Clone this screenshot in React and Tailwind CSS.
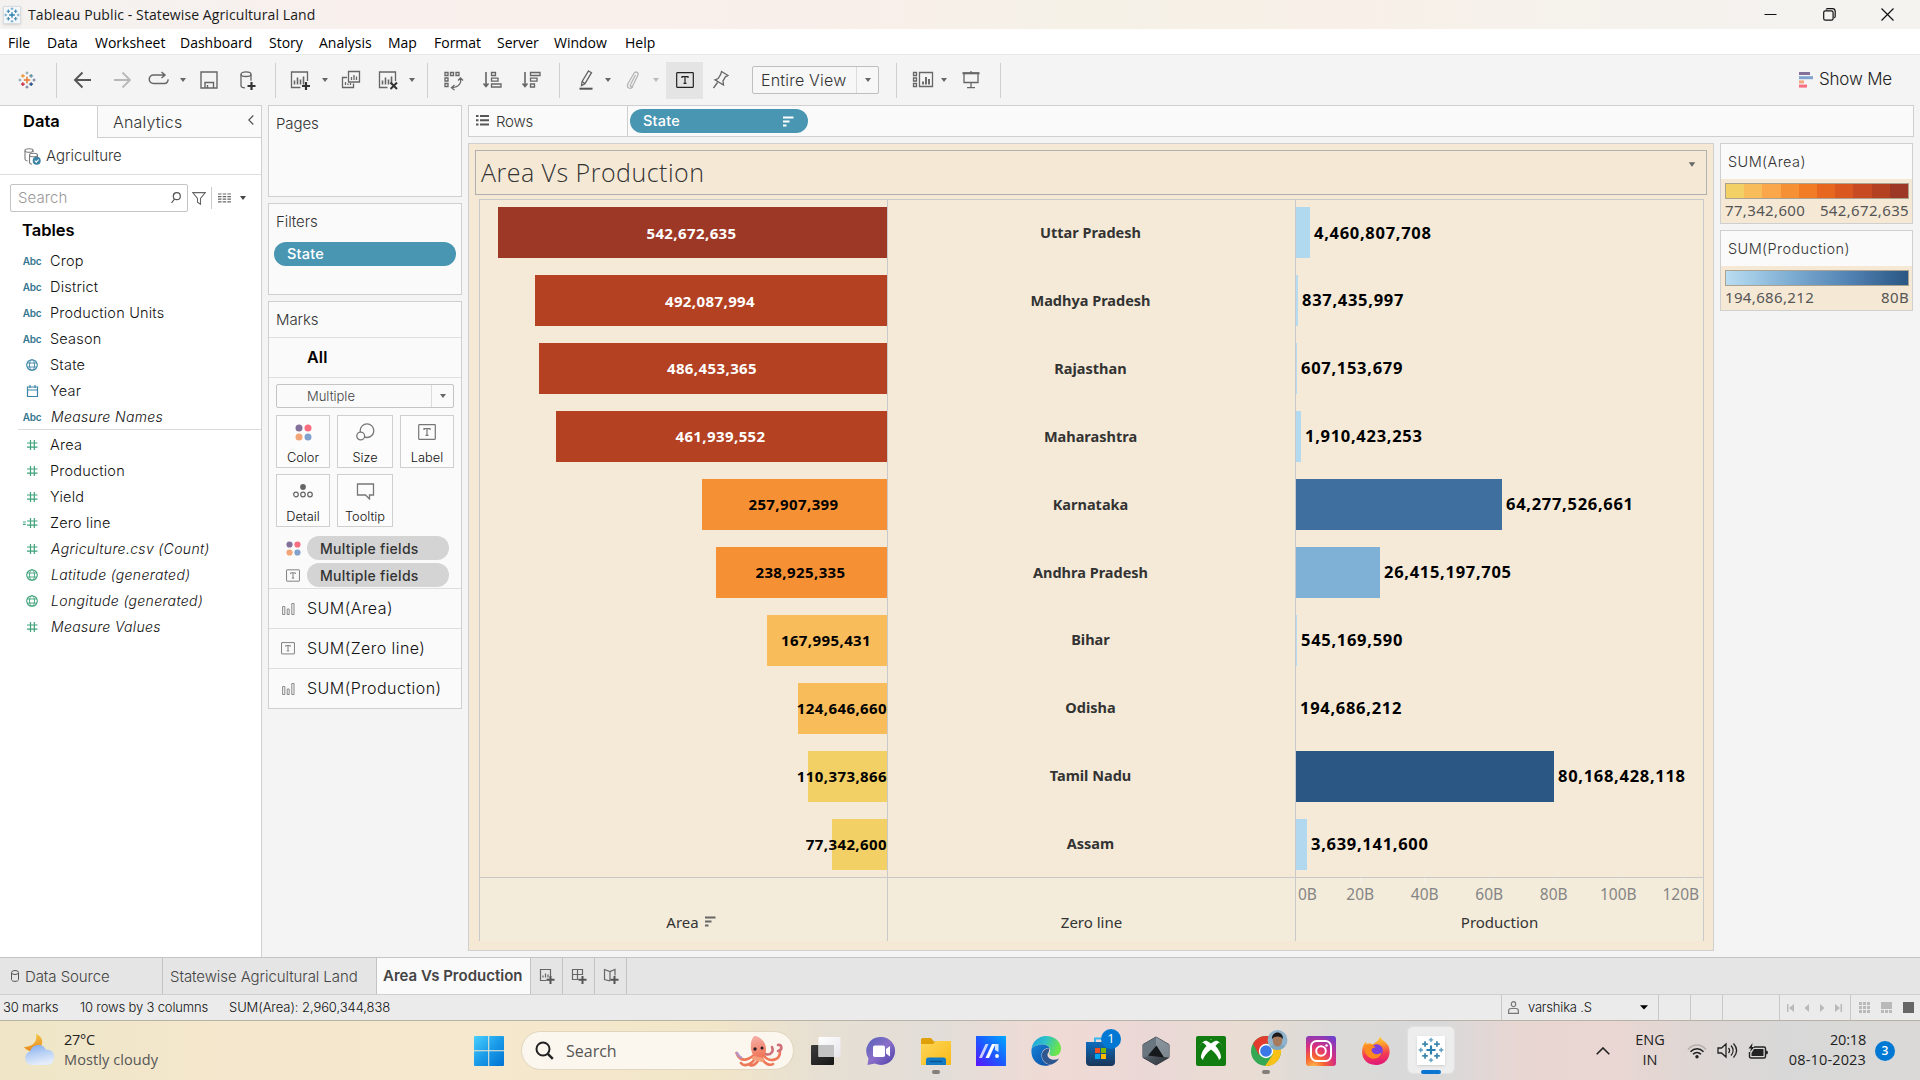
import React from "react";

const UI = "font-[Inter,sans-serif] font-[350]";
const SANS = "font-['Open_Sans',sans-serif] font-normal";
const VIZ = "font-['Noto_Sans',sans-serif] font-normal";

/* ---------- shared glyphs ---------- */

const PLUSES = [
  [12, 12, 4.2, "#e8762c", "#2b7fae"],
  [6.5, 6.5, 2.6, "#eb912b", "#3d86ad"],
  [17.5, 6.5, 2.6, "#5c8aa0", "#3d86ad"],
  [6.5, 17.5, 2.6, "#c72037", "#3d86ad"],
  [17.5, 17.5, 2.6, "#1f457e", "#3d86ad"],
  [12, 2.6, 2, "#7199a6", "#5a9cbd"],
  [12, 21.4, 2, "#5b6591", "#5a9cbd"],
  [2.6, 12, 2, "#7199a6", "#5a9cbd"],
  [21.4, 12, 2, "#5b6591", "#5a9cbd"],
];

function TableauMark({ className, mono }) {
  return (
    <svg viewBox="0 0 24 24" className={className} fill="none">
      {PLUSES.map(([x, y, r, c, m], i) => (
        <path
          key={i}
          d={`M${x - r} ${y}H${x + r}M${x} ${y - r}V${y + r}`}
          stroke={mono ? m : c}
          strokeWidth={i === 0 ? 2 : i < 5 ? 1.6 : 1.2}
        />
      ))}
    </svg>
  );
}

function Icon({ children, className = "", stroke = "#666" }) {
  return (
    <svg viewBox="0 0 24 24" width="24" height="24" fill="none" stroke={stroke} strokeWidth="1.3" className={`shrink-0 ${className}`}>
      {children}
    </svg>
  );
}

function Caret({ className = "", fill = "#666" }) {
  return (
    <svg viewBox="0 0 12 12" width="12" height="12" className={`shrink-0 ${className}`}>
      <path d="M3 4h6l-3 4z" fill={fill} />
    </svg>
  );
}

const Plus = ({ x, y, r = 4 }) => (
  <path d={`M${x - r} ${y}h${2 * r}M${x} ${y - r}v${2 * r}`} stroke="#333" strokeWidth="2.2" />
);

const Sep = ({ className = "" }) => <div className={`h-[35px] w-px shrink-0 bg-[#cfcfcf] ${className}`} />;

const TBox = ({ w = 18, h = 16, className = "", stroke = "#777" }) => (
  <svg viewBox="0 0 18 16" width={w} height={h} fill="none" stroke={stroke} strokeWidth="1.2" className={`shrink-0 ${className}`}>
    <rect x="0.7" y="0.7" width="16.6" height="14.6" rx="0.5" />
    <path d="M6 6V4.6h6V6M9 4.6v6.8M7.5 11.4h3" />
  </svg>
);

const ColorDots = ({ size = 17 }) => (
  <svg viewBox="0 0 17 17" width={size} height={size} className="shrink-0">
    <circle cx="4" cy="4" r="3.5" fill="#83709b" />
    <circle cx="13" cy="4" r="3.5" fill="#f86d80" />
    <circle cx="4" cy="13" r="3.5" fill="#f3a577" />
    <circle cx="13" cy="13" r="3.5" fill="#80a2cc" />
  </svg>
);

const SortGlyph = ({ className = "", fill = "#666" }) => (
  <svg viewBox="0 0 11 11" width="11" height="11" className={`shrink-0 ${className}`} fill={fill}>
    <path d="M0 0.5h10.5v2H0zM0 4.5h6.5v2H0zM0 8.5h3.5v2H0z" />
  </svg>
);

/* ---------- window chrome ---------- */

function TitleBar() {
  return (
    <div className={`flex h-[29px] items-center bg-[linear-gradient(90deg,#f4f2f0_0%,#f9f0ed_20%,#f9efea_42%,#f5f1e7_56%,#f8f0e8_70%,#f5f2ed_85%,#f4f3f0_100%)] ${SANS}`}>
      <div className="ml-[3px] flex h-[18px] w-[18px] items-center justify-center border border-[#d9dde0] bg-[#f3f7f9] shadow-sm">
        <TableauMark mono className="h-4 w-4" />
      </div>
      <span className="ml-[7px] text-[14px] tracking-[0.09px] whitespace-nowrap text-[#1a1a1a]">Tableau Public - Statewise Agricultural Land</span>
      <div className="mr-[26px] ml-auto flex items-center gap-[45.500px]">
        <svg width="13" height="13" viewBox="0 0 13 13" stroke="#111" fill="none"><path d="M0.5 6.5h12" /></svg>
        <svg width="13" height="13" viewBox="0 0 13 13" stroke="#111" fill="none" strokeWidth="1.2">
          <rect x="0.7" y="2.8" width="9.4" height="9.4" rx="1.6" />
          <path d="M3 1.5Q3.6 .7 5 .7h4.400q2.800 0 2.800 2.800v4.400q0 1.500-.9 2" />
        </svg>
        <svg width="13" height="13" viewBox="0 0 13 13" stroke="#111" fill="none" strokeWidth="1.2"><path d="M.5 .5l12 12M12.500 .5l-12 12" /></svg>
      </div>
    </div>
  );
}

const MENU = [
  ["File", "w-[39px]"], ["Data", "w-[48px]"], ["Worksheet", "w-[85px]"], ["Dashboard", "w-[89px]"], ["Story", "w-[50px]"],
  ["Analysis", "w-[69px]"], ["Map", "w-[46px]"], ["Format", "w-[63px]"], ["Server", "w-[57px]"], ["Window", "w-[71px]"], ["Help", "w-[40px]"],
];

function MenuBar() {
  return (
    <div className={`flex h-[25px] items-center bg-white pt-px pl-2 text-[14px] text-black ${SANS}`}>
      {MENU.map(([m, w]) => <span key={m} className={w}>{m}</span>)}
    </div>
  );
}

const Bars = ({ x = 0, y = 0, s = 1 }) => (
  <g transform={`translate(${x} ${y}) scale(${s})`}><path d="M6.500 16v-4M9.500 16v-7M12.500 16v-5M15.500 16v-8" strokeWidth="1.6" /></g>
);

function Toolbar() {
  return (
    <div className="flex h-[51px] items-center border-t border-[#e8e8e8] bg-[#f4f4f4]">
      <TableauMark className="ml-[18px] h-[18px] w-[18px]" />
      <Sep className="ml-[20px]" />
      <Icon className="ml-[14px]"><path d="M20 12H4.500M11.500 4.500L4 12l7.500 7.500" strokeWidth="1.9" stroke="#555" /></Icon>
      <Icon className="ml-[15px]" stroke="#b8b8b8"><path d="M4 12h15.500M12.500 4.500L20 12l-7.500 7.500" strokeWidth="1.8" /></Icon>
      <Icon className="ml-[13px]"><path d="M17.500 7H6.500a3.700 3.700 0 0 0 0 8.500h11a3.700 3.700 0 0 0 3.500-4.200M14.500 4l3.500 3-3.500 3" strokeWidth="1.500" /></Icon>
      <Caret className="ml-[6px]" />
      <Icon className="ml-2"><path d="M4 4h16v16H4zM8 20v-5.500h8.500V20M10.500 17v3" strokeWidth="1.400" /></Icon>
      <Icon className="ml-[14px]">
        <ellipse cx="11" cy="6.200" rx="5" ry="2.300" /><path d="M6 6.200v11.500c0 1 1.500 2 4 2.200M16 6.200v6.500" /><Plus x={16.500} y={18} />
      </Icon>
      <Sep className="ml-[16px]" />
      <Icon className="ml-3"><path d="M19.500 13V4h-16v15.500h9" /><Bars y={0.500} /><Plus x={18} y={18} /></Icon>
      <Caret className="ml-[7px]" />
      <Icon className="ml-2"><path d="M9.500 3.500h11v10.500h-11zM8 9.500H3.500V19.500h11V15.500M12.500 12v-3M15 12V7M17.500 12V8.500M6.500 17v-3M9 17v-1.500M11.500 17v-2" /></Icon>
      <Icon className="ml-[13px]"><path d="M19.500 13V4h-16v15.500h8" /><Bars y={0.500} /><path d="M14.500 14.500l6.500 6.500M21 14.500l-6.500 6.500" stroke="#333" strokeWidth="2" /></Icon>
      <Caret className="ml-[6px]" />
      <Sep className="ml-[9px]" />
      <Icon className="ml-[13px]">
        <path d="M4 4.500h3v3H4zM9.500 4.500h3v3h-3zM15 4.500h3v3h-3zM4 10h3v3H4zM4 15.500h3v3H4z" />
        <path d="M19.500 10.500c1 4-1 8.500-8.500 9M17 12.500l2.500-2.500 2.500 2.500M13.500 17l-3 2.700 3 2.300" />
      </Icon>
      <Icon className="ml-[15px]"><path d="M6 4v14M3.500 15.500L6 18.500l2.500-3" strokeWidth="1.600" /><path d="M11.500 4.500h4v3h-4zM11.500 10.200h6.500v3h-6.500zM11.500 16h9.500v3h-9.500z" /></Icon>
      <Icon className="ml-[15px]"><path d="M6 4v14M3.500 15.500L6 18.500l2.500-3" strokeWidth="1.600" /><path d="M11.500 4.500h9.500v3h-9.500zM11.500 10.200h6.500v3h-6.500zM11.500 16h4v3h-4z" /></Icon>
      <Sep className="ml-4" />
      <Icon className="ml-[14px]"><path d="M14.500 3l3 1.700-6.500 11-3.500 1.800.5-3.800zM8 13.500l3 2" /><path d="M5.500 20.700h13" stroke="#555" strokeWidth="2" /></Icon>
      <Caret className="ml-[4px]" />
      <Icon className="ml-[6px]" stroke="#b5b5b5"><path d="M15.500 7l-5 9.500c-1 1.800 1.200 2.800 2.200 1.200l5-10c1.500-3.300-2-5-3.800-2.200L8 15.500c-2 4.500 2.500 6.500 5 3" /></Icon>
      <Caret className="ml-[6px]" fill="#bbb" />
      <div className="ml-[4px] flex h-[37px] w-[37px] items-center justify-center bg-[#e4e4e4]"><TBox stroke="#222" /></div>
      <Icon className="ml-[5px]"><path d="M13.500 3.500l6.500 4-1.500 1-1 .2-2.500 4.300.5 4-8.500-5.200 3.200-1.300 2.600-4.300zM9.500 14.500L5.500 20" /></Icon>
      <div className="ml-5 flex h-7 w-[127px] items-center rounded-xs border border-[#bfbfbf] bg-[#f7f7f7]">
        <span className="w-[103px] pl-2 text-[16px] tracking-[0.2px] whitespace-nowrap text-[#333]">Entire View</span>
        <div className="flex h-full flex-1 items-center justify-center border-l border-[#dcdcdc]"><Caret /></div>
      </div>
      <Sep className="ml-[17px]" />
      <Icon className="ml-[14px]"><path d="M2.500 4.500h3v3h-3zM2.500 10h3v3h-3zM2.500 15.500h3v3h-3zM8.500 4.500h13v14h-13z" /><path d="M12 16.500v-3M15 16.500V9M18 16.500v-5.500" strokeWidth="1.900" /></Icon>
      <Caret className="ml-[3px]" />
      <Icon className="ml-[9px]"><path d="M3.500 5.200h17" strokeWidth="2.200" /><path d="M5 6v8.500h14V6M12 3v2M12 14.500v5M8 19.700h8" /></Icon>
      <Sep className="ml-[17px]" />
      <svg viewBox="0 0 14 16" width="14" height="16" className="ml-auto">
        <path d="M0 0h11v3H0z" fill="#83709b" /><path d="M0 4.200h14v3H0z" fill="#7fa4cf" /><path d="M0 8.400h5v3H0z" fill="#f2a67d" /><path d="M0 12.600h8v3H0z" fill="#f86d80" />
      </svg>
      <span className="mr-[25px] ml-[6px] w-[76px] text-[17px] tracking-[-0.2px] whitespace-nowrap text-[#222]">Show Me</span>
    </div>
  );
}

/* ---------- data pane ---------- */

const FIELDS = [
  ["abc", "Crop"], ["abc", "District"], ["abc", "Production Units"], ["abc", "Season"],
  ["globe", "State"], ["date", "Year"], ["abc", "Measure Names", true],
];
const MEASURES = [
  ["num", "Area"], ["num", "Production"], ["num", "Yield"], ["calc", "Zero line"], ["num", "Agriculture.csv (Count)", true],
  ["globe", "Latitude (generated)", true], ["globe", "Longitude (generated)", true], ["num", "Measure Values", true],
];

function FieldIcon({ kind, color }) {
  if (kind === "abc") return <span className="text-[10px] font-semibold tracking-[-0.3px] text-[#33758f]">Abc</span>;
  return (
    <svg viewBox="0 0 20 12" width="20" height="12" fill="none" stroke={color} strokeWidth="1.200" className="overflow-visible">
      {kind === "globe" && (
        <g strokeWidth="0.900">
          <circle cx="10" cy="6" r="5.300" strokeWidth="1.100" />
          <ellipse cx="10" cy="6" rx="2.500" ry="5.300" />
          <path d="M5.200 4h9.600M5.200 8h9.600" />
        </g>
      )}
      {kind === "date" && <path d="M5.500 2h10v9.500h-10zM5.500 5h10M8 0v3M13 0v3" />}
      {(kind === "num" || kind === "calc") && <path d="M5 4h10.500M5 8.200h10.500M8.500 1v10M12.300 1v10" />}
      {kind === "calc" && <path d="M1 5h2.800M1 7.300h2.800" />}
    </svg>
  );
}

function FieldList({ items, color }) {
  return items.map(([kind, name, italic]) => (
    <div key={name} className="flex h-[26px] items-center">
      <div className="ml-5 flex w-6 items-center justify-center"><FieldIcon kind={kind} color={color} /></div>
      <span className={italic ? "mb-[2px] ml-[7px] text-[14px] tracking-[0.35px] whitespace-nowrap italic" : "ml-[6px] text-[14.500px] tracking-[0.200px] whitespace-nowrap"}>{name}</span>
    </div>
  ));
}

function DataPane() {
  return (
    <div className="flex h-[852px] w-[262px] flex-col border-t border-r border-[#cfcfcf] bg-white text-[#111]">
      <div className="flex h-8">
        <div className="w-[97px] pt-[3px] pl-[23px] text-[16.500px] font-semibold tracking-[0px] text-black">Data</div>
        <div className="flex flex-1 items-center border-b border-l border-[#cfcfcf] bg-[#fafafa] pl-[15px] text-[16px] tracking-[0.2px] text-[#333]">
          Analytics
          <svg width="6" height="10" viewBox="0 0 6 10" className="mr-[7px] mb-1 ml-auto" fill="none" stroke="#555" strokeWidth="1.200"><path d="M5.300 .5L.8 5l4.500 4.500" /></svg>
        </div>
      </div>
      <div className="flex h-[37px] items-center border-b border-[#dedede] pl-6 text-[15px] tracking-[-0.05px] text-[#333]">
        <svg width="17" height="17" viewBox="0 0 17 17" fill="none" stroke="#777" strokeWidth="1.100" className="mr-[5px]">
          <ellipse cx="5" cy="2.500" rx="4" ry="1.800" /><path d="M1 2.500v8.500c0 1 1 1.700 2.500 2M5.500 8v6.500c0 .8 1 1.500 2.500 1.700" /><ellipse cx="9.500" cy="7" rx="4" ry="1.800" /><path d="M9 2.500v1.500M13.500 7v2" />
          <circle cx="12.700" cy="12.700" r="4" fill="#3a83a6" stroke="none" /><path d="M10.800 12.700l1.500 1.500 2.500-2.700" stroke="#fff" />
        </svg>
        Agriculture
      </div>
      <div className="mt-[9px] ml-[10px] flex h-7 items-center">
        <div className="flex h-7 w-[178px] items-center rounded-xs border border-[#c4c4c4] pl-[7px] text-[15px] tracking-[0.1px] text-[#999]">
          Search
          <svg width="10" height="12" viewBox="0 0 10 12" fill="none" stroke="#555" strokeWidth="1.200" className="mr-[6px] ml-auto"><circle cx="5.800" cy="4.200" r="3.500" /><path d="M3.500 7L.5 11" /></svg>
        </div>
        <svg width="14" height="13" viewBox="0 0 14 13" fill="none" stroke="#666" strokeWidth="1.100" className="ml-[4px]"><path d="M.7 .6h12.600L8.500 6.500v5.800l-3-2V6.500z" /></svg>
        <div className="ml-[5px] h-[22px] w-px bg-[#ccc]" />
        <svg width="13" height="10" viewBox="0 0 13 10" stroke="#666" strokeWidth="1.200" className="ml-[6px]"><path d="M0 1h13M0 3.600h13M0 6.200h13M0 8.800h13" strokeDasharray="3.500 1.200" /></svg>
        <Caret className="ml-[6px]" fill="#444" />
      </div>
      <div className="mt-[2px] mb-[2px] flex h-8 items-center pl-[22px] text-[16.500px] font-semibold tracking-[0px] text-black">Tables</div>
      <FieldList items={FIELDS} color="#3a83a6" />
      <div className="-mt-px ml-[18px] h-[3px] border-t border-[#dcdcdc]" />
      <FieldList items={MEASURES} color="#3fa37c" />
    </div>
  );
}

/* ---------- cards column ---------- */

const panel = "border border-[#cfcfcf] bg-[#fafafa]";
const cardTitle = "text-[15px] tracking-[-0.1px] text-[#333]";

function MarkButton({ label, children, className }) {
  return (
    <div className={`flex h-[53px] flex-col items-center justify-between border border-[#cfcfcf] bg-[#fcfcfc] pt-[6px] pb-px ${className}`}>
      <div className="flex h-5 items-center">{children}</div>
      <span className="text-[12.800px] leading-[17px] text-[#111]">{label}</span>
    </div>
  );
}

const MiniBars = () => (
  <svg width="13" height="12" viewBox="0 0 13 12" fill="none" stroke="#888"><path d="M.6 3.500h2.200v8H.6zM5.200 6h2v5.500h-2zM9.800 .5h2.200v11H9.800z" /></svg>
);

function MarksCard() {
  return (
    <div className={`mt-[6px] flex h-[408px] flex-col ${panel}`}>
      <div className={`flex h-[36px] items-center border-b border-[#dedede] pt-[2px] pl-[7px] ${cardTitle}`}>Marks</div>
      <div className="flex h-10 items-center border-b border-[#dedede] pb-[2px] pl-[38px] text-[16px] font-semibold tracking-[0.2px] text-black">All</div>
      <div className="mt-[6px] ml-[7px] flex h-6 w-[178px] items-center rounded-xs border border-[#c4c4c4] text-[13px] text-[#444]">
        <span className="flex-1 pt-px pl-[30px]">Multiple</span>
        <div className="flex h-full w-[22px] items-center justify-center border-l border-[#dcdcdc]"><Caret /></div>
      </div>
      <div className="mt-[7px] ml-[7px] flex gap-[7px]">
        <MarkButton label="Color" className="w-[54px]"><ColorDots /></MarkButton>
        <MarkButton label="Size" className="w-[56px]">
          <svg width="19" height="18" viewBox="0 0 19 18" fill="#fcfcfc" stroke="#777" strokeWidth="1.300"><circle cx="11" cy="7.700" r="6.800" /><circle cx="4.700" cy="13" r="3.900" /></svg>
        </MarkButton>
        <MarkButton label="Label" className="w-[54px]"><TBox /></MarkButton>
      </div>
      <div className="mt-[6px] ml-[7px] flex gap-[7px]">
        <MarkButton label="Detail" className="w-[54px]">
          <svg width="20" height="14" viewBox="0 0 20 14" fill="none" stroke="#666" strokeWidth="1.200"><circle cx="10" cy="3" r="2.900" fill="#666" stroke="none" /><circle cx="3" cy="10.500" r="2.300" /><circle cx="10" cy="10.500" r="2.300" /><circle cx="17" cy="10.500" r="2.300" /></svg>
        </MarkButton>
        <MarkButton label="Tooltip" className="w-[56px]">
          <svg width="19" height="17" viewBox="0 0 19 17" fill="none" stroke="#777" strokeWidth="1.300"><path d="M1.500 1h16v11h-4v4l-4-4h-8z" /></svg>
        </MarkButton>
      </div>
      <div className="mt-[9px] flex flex-col gap-[3px]">
        {["dots", "text"].map((k) => (
          <div key={k} className="flex h-6 items-center">
            <div className="ml-[17px] flex w-[14px] justify-center">{k === "dots" ? <ColorDots size={15} /> : <TBox w={14} h={13} />}</div>
            <div className="ml-[7px] flex h-6 w-[142px] items-center rounded-full bg-[#d4d4d4] pt-px pl-[13px] text-[14px] font-medium tracking-[0.3px] whitespace-nowrap text-[#333]">Multiple fields</div>
          </div>
        ))}
      </div>
      {[["bar", "SUM(Area)"], ["text", "SUM(Zero line)"], ["bar", "SUM(Production)"]].map(([k, name], i) => (
        <div key={name} className={`flex h-10 items-center border-t border-[#dedede] text-[16px] tracking-[0.450px] whitespace-nowrap text-[#111] ${i === 0 ? "mt-px" : ""}`}>
          <div className="ml-[11px] flex w-4 justify-center">{k === "bar" ? <MiniBars /> : <TBox w={14} h={12.500} />}</div>
          <span className="mb-px ml-[11px]">{name}</span>
        </div>
      ))}
    </div>
  );
}

function CardsColumn() {
  return (
    <div className="ml-[6px] flex w-[194px] flex-col">
      <div className={`h-[92px] pt-[7px] pl-[7px] ${panel} ${cardTitle}`}>Pages</div>
      <div className={`mt-[6px] h-[92px] pt-[7px] ${panel}`}>
        <div className={`pl-[7px] ${cardTitle}`}>Filters</div>
        <div className="mx-[5px] mt-[8px] flex h-6 items-center rounded-full bg-[#4996b2] pt-px pl-[13px] text-[14.500px] font-medium tracking-[0.200px] text-white">State</div>
      </div>
      <MarksCard />
    </div>
  );
}

/* ---------- visualisation ---------- */

const ROWS = [
  ["Uttar Pradesh", 542672635, "#9e3826", true, 4460807708, "#b0d8ee"],
  ["Madhya Pradesh", 492087994, "#b34122", true, 837435997, "#b6dcf2"],
  ["Rajasthan", 486453365, "#b34122", true, 607153679, "#b7ddf2"],
  ["Maharashtra", 461939552, "#b34122", true, 1910423253, "#b4daf0"],
  ["Karnataka", 257907399, "#f69035", false, 64277526661, "#3f6f9f"],
  ["Andhra Pradesh", 238925335, "#f69035", false, 26415197705, "#7fb0d6"],
  ["Bihar", 167995431, "#f8bc5b", false, 545169590, "#b7ddf2"],
  ["Odisha", 124646660, "#f8bc5b", false, 194686212, "#b9ddf1"],
  ["Tamil Nadu", 110373866, "#f3d066", false, 80168428118, "#2a5783"],
  ["Assam", 77342600, "#f3d066", false, 3639141600, "#b1d8ef"],
];

const fmt = (n) => n.toLocaleString("en-US");
const areaPx = (n) => Math.round(n * 7.16e-7);
const prodPx = (n) => Math.max(0, Math.round(n * 3.223e-9 - 0.7));

function Chart() {
  return (
    <div className={`ml-[10px] mt-[4px] grid h-[742px] w-[1225px] grid-cols-[408px_408px_407px] grid-rows-[677px_64px] border-t border-r border-l border-[#c9c9c9] bg-[#f5ead8] ${VIZ}`}>
      <div className="-my-px grid grid-rows-10 border-r border-[#c9c9c9]">
        {ROWS.map(([name, area, fill, light]) => (
          <div key={name} className="flex items-center justify-end">
            <div
              className={`flex h-[51px] items-center text-[15px] font-bold tracking-[0.4px] ${areaPx(area) < 95 ? "justify-end" : "justify-center pr-[2px]"} ${light ? "text-white" : "text-black"}`}
              style={{ width: areaPx(area), backgroundColor: fill }}
            >
              {fmt(area)}
            </div>
          </div>
        ))}
      </div>
      <div className="-my-px grid grid-rows-10 border-r border-[#c9c9c9]">
        {ROWS.map(([name]) => (
          <div key={name} className="flex items-center justify-center pr-[2px] text-[14.500px] font-bold text-[#333]">{name}</div>
        ))}
      </div>
      <div className="-my-px grid grid-rows-10">
        {ROWS.map(([name, , , , prod, fill]) => (
          <div key={name} className="flex items-center">
            <div className="h-[51px] shrink-0" style={{ width: prodPx(prod), backgroundColor: fill }} />
            <span className="ml-[4px] text-[16.500px] font-bold tracking-[0.7px] text-black">{fmt(prod)}</span>
          </div>
        ))}
      </div>
      <div className="z-10 flex items-end justify-center border-t border-r border-[#c9c9c9] bg-[#f4ecda] pb-[8px] pl-[15px] text-[15px] text-[#333]">
        Area
        <SortGlyph className="mb-[6px] ml-[6px]" />
      </div>
      <div className="z-10 flex items-end justify-center border-t border-r border-[#c9c9c9] bg-[#f4ecda] pb-[8px] text-[15px] text-[#333]">Zero line</div>
      <div className="z-10 flex flex-col border-t border-[#c9c9c9] bg-[#f4ecda]">
        <div className="flex text-[15.500px] leading-[20px] text-[#858585]">
          <div className="w-8 pt-[6px] pl-[2px]">0B</div>
          {[20, 40, 60, 80, 100].map((v) => (
            <div key={v} className="flex w-[64.500px] flex-col items-center">
              <div className="h-[5px] w-px bg-[#f3f2ef]" />
              <div className="pt-px">{v}B</div>
            </div>
          ))}
          <div className="flex w-[52px] flex-col">
            <div className="ml-[32px] h-[5px] w-px bg-[#f3f2ef]" />
            <div className="pt-px pl-[12px]">120B</div>
          </div>
        </div>
        <div className="mt-[6px] text-center text-[15px] leading-[24px] text-[#333]">Production</div>
      </div>
    </div>
  );
}

function Workspace() {
  return (
    <div className="ml-[6px] flex w-[1446px] flex-col">
      <div className={`flex h-8 items-center ${panel}`}>
        <svg width="13" height="11" viewBox="0 0 13 11" className="mb-[2px] ml-[7px]" fill="#555"><path d="M0 0h2.500v2H0zM4 0h9v2H4zM0 4.300h2.500v2H0zM4 4.300h9v2H4zM0 8.600h2.500v2H0zM4 8.600h9v2H4z" /></svg>
        <span className="ml-[7px] w-[131px] pt-[2px] text-[15px] tracking-[-0.2px] text-[#333]">Rows</span>
        <div className="h-full w-px bg-[#cfcfcf]" />
        <div className="ml-[2px] flex h-6 w-[178px] items-center rounded-full bg-[#4996b2] pr-[14px] pl-[13px] text-[14.500px] font-medium tracking-[0.200px] text-white">
          State
          <SortGlyph className="ml-auto" fill="#fff" />
        </div>
      </div>
      <div className="mt-[6px] flex">
        <div className="h-[808px] w-[1246px] border border-[#cfcfcf] bg-[#f5e9d6]">
          <div className="mt-[6px] ml-[6px] flex h-[45px] w-[1232px] justify-between border border-[#b0b0b0]">
            <span className="pl-[5px] font-['Open_Sans',sans-serif] text-[25px] leading-[43px] font-light tracking-[0.48px] text-[#333]">Area Vs Production</span>
            <Caret className="mt-[7px] mr-[7px] h-[13px] w-[14px]" />
          </div>
          <Chart />
        </div>
        <div className="ml-[6px] flex w-[193px] flex-col gap-[6px] text-[14.500px] tracking-[0.400px] text-[#333]">
          <div className="h-[81px] border border-[#cfcfcf] bg-[#f5e9d6]">
            <div className="flex h-[35px] items-center bg-[#fafafa] pl-[7px]">SUM(Area)</div>
            <div className="mr-[3px] ml-1 mt-1 grid h-4 grid-cols-10 border border-[#aaa391]">
              {["bg-[#f3d066]", "bg-[#f8bc5b]", "bg-[#faa64b]", "bg-[#f69035]", "bg-[#f27b25]", "bg-[#e8671e]", "bg-[#da5720]", "bg-[#c84a22]", "bg-[#b34122]", "bg-[#9e3826]"].map((c) => <div key={c} className={c} />)}
            </div>
            <div className={`mr-[3px] ml-1 -mt-px flex justify-between text-[15px] leading-[24px] tracking-[0.35px] text-[#555] ${VIZ}`}><span>77,342,600</span><span>542,672,635</span></div>
          </div>
          <div className="h-[81px] border border-[#cfcfcf] bg-[#f5e9d6]">
            <div className="flex h-[35px] items-center bg-[#fafafa] pl-[7px]">SUM(Production)</div>
            <div className="mr-[3px] ml-1 mt-1 h-4 border border-[#aaa391] bg-[linear-gradient(90deg,#b9ddf1,#7eaed3_35%,#4f7fb0_70%,#2a5783)]" />
            <div className={`mr-[3px] ml-1 -mt-px flex justify-between text-[15px] leading-[24px] tracking-[0.35px] text-[#555] ${VIZ}`}><span>194,686,212</span><span>80B</span></div>
          </div>
        </div>
      </div>
    </div>
  );
}

/* ---------- sheet tabs and status ---------- */

function SheetTabs() {
  const cell = "flex h-full items-center border-r border-[#c4c4c4]";
  return (
    <div className="flex h-[37px] items-center border-t border-[#c4c4c4] bg-[#e5e5e5] text-[15px] tracking-[-0.08px] whitespace-nowrap text-[#444]">
      <div className={`w-[163px] pt-[2px] pl-[11px] ${cell}`}>
        <svg width="8" height="12" viewBox="0 0 8 12" fill="none" stroke="#555" className="mb-[3px] mr-[6px]"><path d="M.5 3v6.500C.5 12 7.500 12 7.500 9.500V3" /><ellipse cx="4" cy="2.500" rx="3.500" ry="2" /></svg>
        Data Source
      </div>
      <div className={`w-[214px] pt-[2px] pl-[7px] ${cell}`}>Statewise Agricultural Land</div>
      <div className={`w-[154px] bg-[#fafafa] pl-[6px] text-[15px] font-semibold tracking-[0px] ${cell}`}>Area Vs Production</div>
      {["M11.500 8V1.500h-10v11h6M4 9.500V7.500M6.500 9.500v-4M9 9.500v-3", "M11.500 7V1.500h-10v10h6M6.500 1.500v10M1.500 6.500h10", "M12 7.500V1.500L7 3.500 1.500 1.500v10L7 13M7 3.500V13"].map((d) => (
        <div key={d} className={`w-8 justify-center ${cell}`}>
          <svg width="16" height="16" viewBox="0 0 16 16" fill="none" stroke="#666" strokeWidth="1.200"><path d={d} /><path d="M7.500 11.800h8M11.500 8v8" stroke="#555" strokeWidth="2" /></svg>
        </div>
      ))}
    </div>
  );
}

function StatusBar() {
  const cell = "flex h-full items-center border-l border-[#c8c8c8]";
  return (
    <div className="flex h-[26px] items-center border-t border-[#cfcfcf] bg-[#ebebeb] pl-[3px] text-[13px] whitespace-nowrap text-[#111]">
      <span className="w-[77px] tracking-[-0.15px]">30 marks</span>
      <span className="w-[149px] tracking-[-0.15px]">10 rows by 3 columns</span>
      <span className="tracking-[-0.08px]">SUM(Area): 2,960,344,838</span>
      <div className={`ml-auto w-[157px] ${cell}`}>
        <svg width="11" height="13" viewBox="0 0 11 13" fill="none" stroke="#777" className="ml-[6px]" strokeWidth="1.200"><ellipse cx="5.500" cy="3.200" rx="2.200" ry="2.500" /><path d="M.6 12.300V10q0-2.500 2.500-2.500h4.800q2.500 0 2.500 2.500v2.300z" /></svg>
        <span className="ml-[9px] tracking-[-0.200px]">varshika .S</span>
        <svg width="8" height="5" viewBox="0 0 8 5" className="mr-[10px] ml-auto"><path d="M0 .3h8L4 4.500z" fill="#000" /></svg>
      </div>
      <div className={`w-8 ${cell}`} />
      <div className={`w-8 ${cell}`} />
      <div className={`w-[57px] ${cell}`} />
      <div className={`w-[71px] gap-[9px] pl-[7px] ${cell}`}>
        {["M0 0h1.500v8H0zM7 0v8L2 4z", "M6 0v8L1.500 4z", "M1 0v8l4.500-4z", "M5.500 0H7v8H5.500zM0 0v8l5-4z"].map((d) => <svg key={d} width="7" height="8" viewBox="0 0 7 8" fill="#b9b9b9"><path d={d} /></svg>)}
      </div>
      <div className={`w-[70px] gap-[11px] pl-2 ${cell}`}>
        <svg width="11" height="11" viewBox="0 0 11 11" fill="#b9b9b9"><path d="M0 0h3v3H0zM4 0h3v3H4zM8 0h3v3H8zM0 4h3v3H0zM4 4h3v3H4zM8 4h3v3H8zM0 8h3v3H0zM4 8h3v3H4zM8 8h3v3H8z" /></svg>
        <svg width="11" height="11" viewBox="0 0 11 11" fill="#b9b9b9"><path d="M0 0h11v7H0zM0 8h3v3H0zM4 8h3v3H4zM8 8h3v3H8z" /></svg>
        <div className="h-[11px] w-[11px] bg-[#666]" />
      </div>
    </div>
  );
}

/* ---------- taskbar ---------- */

function Grad({ id, stops, x2 = 1, y2 = 1 }) {
  return (
    <linearGradient id={id} x1="0" y1="0" x2={x2} y2={y2}>
      {stops.map((c, i) => <stop key={i} offset={i / (stops.length - 1)} stopColor={c} />)}
    </linearGradient>
  );
}

const App30 = ({ children }) => <svg viewBox="0 0 30 30" width="30" height="30" className="overflow-visible">{children}</svg>;

const TaskView = () => (
  <App30>
    <defs><Grad id="tv1" stops={["#3b3b3b", "#171717"]} /><Grad id="tv2" stops={["#ffffff", "#e6e6ec"]} /></defs>
    <rect x="0" y="9" width="23" height="20" rx="1" fill="url(#tv1)" />
    <rect x="7.500" y="1" width="22" height="20" rx="1" fill="url(#tv2)" />
    <path d="M7.500 9H23v12H7.500z" fill="#c3c3c3" />
  </App30>
);

const Chat = () => (
  <App30>
    <defs><Grad id="ch" stops={["#5461b8", "#8a6fc9", "#4b3fa8"]} /></defs>
    <path d="M15 1a14 14 0 1 1-6 26.600L1.500 29l1-6.500A14 14 0 0 1 15 1z" fill="url(#ch)" />
    <rect x="7" y="9.500" width="12" height="11.500" rx="1.800" fill="#fff" /><path d="M20 13l4-3v10.500l-4-3z" fill="#fff" />
  </App30>
);

const Folder = () => (
  <App30>
    <defs><Grad id="fo" stops={["#ffd75a", "#f8b916"]} /></defs>
    <path d="M0 3.500Q0 2 1.500 2h8.500l3 3.500H29V14H0z" fill="#e0a007" />
    <path d="M0 8h12l3-3h14q1 0 1 1v22q0 1-1 1H1q-1 0-1-1z" fill="url(#fo)" />
    <path d="M5 29v-5q0-2.500 2.500-2.500h15Q25 21.500 25 24v5z" fill="#1279c4" /><path d="M9 25.500h12" stroke="#0b4f8c" strokeWidth="1.300" />
  </App30>
);

const MyAsus = () => (
  <App30>
    <defs><Grad id="ma" stops={["#5a12ff", "#1464ff", "#00a8ff"]} y2={-1} /><linearGradient id="ma2" x1="0" y1="1" x2="1" y2="0"><stop offset="0" stopColor="#5a12ff" /><stop offset=".5" stopColor="#1a5cff" /><stop offset="1" stopColor="#00a8ff" /></linearGradient></defs>
    <rect width="30" height="30" fill="url(#ma2)" />
    <path d="M3 22L9.500 8h3L6 22z" fill="#fff" opacity=".75" /><path d="M9.500 22L16 8h3.500L13 22z" fill="#fff" />
    <path d="M19 8l3.500 0v8l-3.500-2z" fill="#fff" opacity=".8" /><circle cx="21" cy="20" r="1.900" fill="#fff" />
  </App30>
);

const Edge = () => (
  <App30>
    <defs><Grad id="e1" stops={["#1aa0e0", "#2fc0c8", "#6be54b"]} y2={0.300} /><Grad id="e2" stops={["#1683d8", "#0c4ba0"]} /></defs>
    <path d="M.5 13C1.500 5.500 7.500 0 15 0c9 0 15 6 15 12.500 0 5-3.500 7.500-7.500 7.500-3.500 0-5-1.500-4-3 2-4-1-8.500-6-8.500C7 8.500 2.500 10 .5 13z" fill="url(#e1)" />
    <path d="M.5 13c2-3 6.500-4.500 12-4.500 3.500.5 5.500 2 6 4-3-1-8 1-8 7 0 5 4.500 10.500 11 8.500C12 33-1 27 .5 13z" fill="url(#e2)" />
    <path d="M18.500 12.500c-4 0-8.500 2.500-7.500 8.500.8 4.500 5.500 8.500 10.500 7 3-1 5-3 6.500-5.500-4 2-8 1.500-10-.5-2-2-2-4.500-.5-5.500z" fill="#0d3f82" opacity=".85" />
  </App30>
);

const Store = () => (
  <App30>
    <defs><Grad id="st" stops={["#0f6cbd", "#1a3558"]} x2={0} /></defs>
    <path d="M9 6V2.500h10V6" stroke="#38b6f0" strokeWidth="2" fill="none" /><path d="M0 6h29v20q0 4-4 4H4q-4 0-4-4z" fill="url(#st)" />
    <path d="M9 12h5v5H9z" fill="#f25022" /><path d="M15 12h5v5h-5z" fill="#7fba00" /><path d="M9 18h5v5H9z" fill="#00a4ef" /><path d="M15 18h5v5h-5z" fill="#ffb900" />
  </App30>
);

const Hex = () => (
  <App30>
    <defs><Grad id="hx" stops={["#8e9aa4", "#4c555d", "#2a2e33"]} /></defs>
    <path d="M15 1l13 7.500v13L15 29 2 21.500v-13z" fill="url(#hx)" stroke="#333b42" />
    <path d="M2 8.500L15 1v9L7 20l-5 1.500z" fill="#69757f" /><path d="M15 1l13 7.500v13L22.500 21 15 10z" fill="#9ca8b0" opacity=".7" />
    <path d="M15.500 9.500L23 21.500l-16-2z" fill="#16191c" />
  </App30>
);

const Xbox = () => (
  <App30>
    <rect width="30" height="30" rx="2" fill="#117c10" /><circle cx="15" cy="15" r="12" fill="#fff" />
    <path d="M15 7.500c-2-2-5-3.500-7-3 2-1.800 5-2.300 7-1 2-1.300 5-.8 7 1-2-.5-5 1-7 3zM10.500 10C6.500 14 4.500 19 5 23.500 2.500 20.500 1.500 15 3.500 10.500 4.500 8 6 6.500 7 6.700c1 .3 2.500 1.800 3.500 3.300zM19.500 10c4 4 6 9 5.500 13.500 2.500-3 3.500-8.500 1.500-13-1-2.500-2.500-4-3.500-3.800-1 .3-2.500 1.800-3.500 3.300zM15 13.500c4 3 8 8 8 11-3 4-13 4-16 0 0-3 4-8 8-11z" fill="#117c10" />
  </App30>
);

const Chrome = () => (
  <App30>
    <circle cx="15" cy="15" r="15" fill="#34a853" />
    <path d="M2 7.500A15 15 0 0 1 28 7.500H15L8 19z" fill="#e33b2e" /><path d="M28 7.500A15 15 0 0 1 14 30l7.500-11L22 10V7.500z" fill="#fbc116" />
    <circle cx="15" cy="15" r="7.200" fill="#fff" /><circle cx="15" cy="15" r="5.800" fill="#3b78e7" />
    <circle cx="26.500" cy="4" r="10" fill="#8fb3cc" /><path d="M19 10.500q7.500-6 15 0a10 10 0 0 1-15 0z" fill="#7fa6bf" />
    <ellipse cx="26.500" cy="4.500" rx="4.700" ry="6" fill="#a77a5c" /><path d="M21 3.500C20-6 33-6 32 3.500 31-.5 22-.5 21 3.500z" fill="#1d1a1b" />
  </App30>
);

const Insta = () => (
  <App30>
    <defs>
      <radialGradient id="ig" cx=".25" cy="1.050" r="1.200"><stop offset="0" stopColor="#fec053" /><stop offset=".3" stopColor="#f8632f" /><stop offset=".6" stopColor="#d92f7f" /><stop offset="1" stopColor="#6d3fce" /></radialGradient>
    </defs>
    <rect width="30" height="30" rx="3" fill="url(#ig)" />
    <g fill="none" stroke="#fff" strokeWidth="2"><rect x="5" y="5" width="20" height="20" rx="5.500" /><circle cx="15" cy="15" r="4.800" /></g><circle cx="20.500" cy="9.500" r="1.300" fill="#fff" />
  </App30>
);

const Firefox = () => (
  <App30>
    <defs><Grad id="ff" stops={["#ffe14a", "#ff9a2b", "#f53b52", "#e01b78"]} x2={0.100} /></defs>
    <path d="M19 .5c1 3 6 5 8.500 9.500C31 19 26 29 15 29S-.5 20 1.500 12C2 9 3.500 7 5 5.500L5.500 8c2-1 4.500-1 6 .5L15 6c2-1 3-3.500 4-5.500z" fill="url(#ff)" />
    <circle cx="15.500" cy="14.500" r="6.300" fill="#7a3fe0" /><path d="M5 9c4-1.500 8 0 9.500 2.500-2.500 0-4 1-4 3 1 4 6 5 10 2-1 5-7 8-12 5S3 13 5 9z" fill="#ff8a1e" />
  </App30>
);

function Octopus() {
  return (
    <svg width="50" height="32" viewBox="0 0 50 32" fill="none" strokeLinecap="round">
      <defs><Grad id="oc" stops={["#f5b3ac", "#f0785a"]} x2={0.200} /></defs>
      <g stroke="#ee7757" strokeWidth="2.600">
        <path d="M19 20C12 26 5 27 1.500 18M21 22c-4 8-12 10-15 6M24 23c-2 7-7 8-9 7M27 23c2 6 8 8 11 6M29 21c6 7 16 4 16-4" />
        <path d="M30 19c6 2 9-3 7-7M43 10c4-1 5 5 0 6" stroke="#cf6f78" /><path d="M2 18c1 2 2 4 4 4.500" stroke="#b894c4" />
      </g>
      <path d="M19 1c4-1 12 5 12 13 0 6-2 9-6.500 9S17 20 16 14c-.5-6 0-9 3-13z" fill="url(#oc)" />
      <circle cx="20" cy="14" r="1.700" fill="#2a1d2a" /><circle cx="27" cy="13" r="1.500" fill="#2a1d2a" /><path d="M19 23l8 2" stroke="#f6a07b" strokeWidth="4" />
    </svg>
  );
}

const APPS = [
  { id: "view", el: <TaskView /> }, { id: "chat", el: <Chat /> }, { id: "files", el: <Folder />, run: true }, { id: "asus", el: <MyAsus /> },
  { id: "edge", el: <Edge /> }, { id: "store", el: <Store />, badge: true }, { id: "hex", el: <Hex /> }, { id: "xbox", el: <Xbox /> },
  { id: "chrome", el: <Chrome />, run: true }, { id: "insta", el: <Insta /> }, { id: "firefox", el: <Firefox /> },
];

function Taskbar() {
  return (
    <div className={`flex h-[60px] items-center border-t border-[#b9b2a6] bg-[linear-gradient(90deg,#efe5c6_0%,#f0e6c9_5%,#f5e7cd_12%,#f6e8ce_24%,#f2e6c8_37%,#e6dfd3_43%,#e2ddd8_49%,#f0dad5_55%,#ead8d6_60%,#e9ddd3_65%,#dcdad8_69%,#d9d9da_75%,#e8d6d3_79%,#ead6d2_84%,#dfd7d4_88%,#d8d8d8_93%,#dad9d7_100%)] ${SANS}`}>
      <svg width="32" height="31" viewBox="0 0 32 31" className="mb-[2px] ml-6">
        <defs><Grad id="cl" stops={["#7ea8ea", "#b5cff5", "#e3ecfa"]} x2={0.300} /><Grad id="mo" stops={["#f5c243", "#e98a1d"]} x2={0} /></defs>
        <path d="M12 0c9 3 8 14-1 17-5 1-9-1-11-4 8 0 14-5 12-13z" fill="url(#mo)" />
        <path d="M7 31a7 7 0 0 1-1-13.500C8 9 20 9 22 16c6-1 9 4 8 8.500-.5 4-3 6.500-7 6.500z" fill="url(#cl)" />
      </svg>
      <div className="mb-[2px] ml-2 flex w-[110px] flex-col text-[14.500px] leading-[20px] whitespace-nowrap">
        <span className="tracking-[-0.3px] text-[#222]">27°C</span>
        <span className="tracking-[0.100px] text-[#555]">Mostly cloudy</span>
      </div>
      <svg width="30" height="30" viewBox="0 0 30 30" className="ml-[300px]">
        <defs><Grad id="wn" stops={["#49d0ff", "#1a9be8", "#0072d2"]} /></defs>
        <path d="M1 0h13.200v14.200H0V1q0-1 1-1zM15.200 0H29q1 0 1 1v13.200H15.200zM0 15.200h14.200V30H1q-1 0-1-1zM15.200 15.200H30V29q0 1-1 1H15.200z" fill="url(#wn)" />
      </svg>
      <div className="ml-[17px] flex h-[39px] w-[273px] items-center rounded-full border border-[#e0d5bd] bg-[#fcf7ee] pl-[13px]">
        <svg width="19" height="19" viewBox="0 0 19 19" fill="none" stroke="#222" strokeWidth="2"><circle cx="8" cy="8" r="6.500" /><path d="M12.800 12.800l5 5" strokeWidth="2.500" /></svg>
        <span className="ml-[12px] text-[16px] text-[#555]">Search</span>
        <div className="mr-[8px] ml-auto"><Octopus /></div>
      </div>
      <div className="ml-[4px] flex">
        {APPS.map((a) => (
          <div key={a.id} className="relative flex h-[59px] w-[55px] items-center justify-center">
            {a.el}
            {a.run && <div className="absolute bottom-[6px] h-[4px] w-2 rounded-full bg-[#837e79]" />}
            {a.badge && <div className="absolute top-2 right-[7px] flex h-5 w-5 items-center justify-center rounded-full bg-[#0078d4] text-[13px] text-white">1</div>}
          </div>
        ))}
        <div className="relative mt-[5px] ml-[4px] flex h-12 w-12 items-center justify-center rounded-md border border-[#e3e1e0] bg-[#ededee]">
          <div className="flex h-[29px] w-[28px] items-center justify-center bg-white shadow-sm"><TableauMark mono className="h-[26px] w-[26px]" /></div>
          <div className="absolute bottom-[-1px] h-[4px] w-5 rounded-full bg-[#0a76d4]" />
        </div>
      </div>
      <svg width="14" height="8" viewBox="0 0 14 8" fill="none" stroke="#222" strokeWidth="1.600" className="ml-auto"><path d="M.7 7.300L7 1l6.300 6.300" /></svg>
      <div className="mb-[2px] ml-[23px] flex w-[34px] flex-col items-center text-[14.500px] leading-[20px] text-[#222]"><span>ENG</span><span>IN</span></div>
      <svg width="20" height="16" viewBox="0 0 20 16" fill="none" stroke="#222" strokeWidth="1.500" className="ml-[20px]">
        <path d="M1 6.500c5-6 13-6 18 0" stroke="#b3aeac" /><path d="M3.500 8.800c3.800-4 9.200-4 13 0M6 11.300c2.400-2.500 5.600-2.500 8 0" /><circle cx="10" cy="13.700" r="1.700" fill="#222" stroke="none" />
      </svg>
      <svg width="21" height="17" viewBox="0 0 21 17" fill="none" stroke="#222" strokeWidth="1.300" className="ml-[10px]"><path d="M1 6v5h3.500L9 15V2L4.500 6zM11.500 6c1.300 1.500 1.300 3.500 0 5M14 3.500c2.700 3 2.700 7 0 10M16.500 1.500c4 4.500 4 9.500 0 14" /></svg>
      <svg width="20" height="16" viewBox="0 0 20 16" className="ml-[10px]"><path d="M6 4h10q1.500 0 1.500 1.500v8Q17.500 15 16 15H3q-1.500 0-1.500-1.500V9" fill="none" stroke="#222" strokeWidth="1.400" /><path d="M6 6h9.500v7h-12v-3zM18 7.500q2 0 2 2t-2 2zM4.500 0L.5 5.500h2.500L2 9l4.500-5H4z" fill="#222" /></svg>
      <div className="mb-[2px] ml-[8px] flex w-[90px] flex-col items-end text-[14.500px] leading-[20px] text-[#222]"><span className="tracking-[-0.200px]">20:18</span><span className="tracking-[0.150px]">08-10-2023</span></div>
      <div className="mr-[25px] ml-[9px] flex h-5 w-5 items-center justify-center rounded-full bg-[#0078d4] text-[12px] font-semibold text-white">3</div>
    </div>
  );
}

export default function App() {
  return (
    <div className={`flex h-[1080px] w-[1920px] flex-col overflow-hidden bg-[#f4f4f4] ${UI}`}>
      <TitleBar />
      <MenuBar />
      <Toolbar />
      <div className="flex h-[852px]">
        <DataPane />
        <CardsColumn />
        <Workspace />
      </div>
      <SheetTabs />
      <StatusBar />
      <Taskbar />
    </div>
  );
}
